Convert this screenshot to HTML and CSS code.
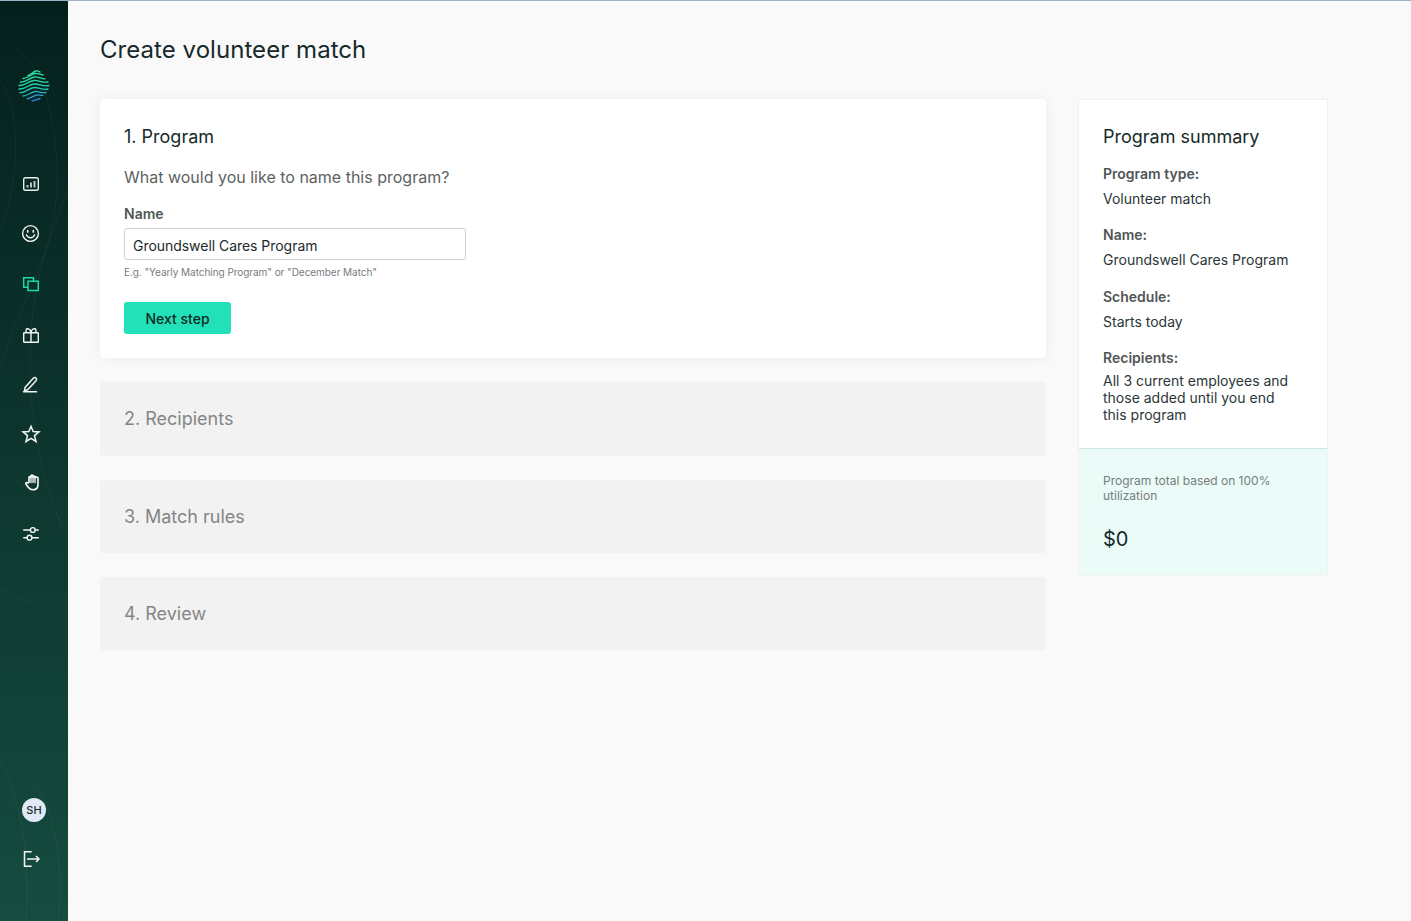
FILE: index.html
```html
<!DOCTYPE html>
<html>
<head>
    <title>Create volunteer match</title>
    <meta name="viewport" content="width=device-width" />
    <link rel="stylesheet" href="styles.css">
</head>
<body>

<nav class="sidebar">
    <svg class="sidebar-lines" width="68" height="921" viewBox="0 0 68 921" fill="none">
        <path d="M16 50c22 12 42 60 41 130c-1 80-38 120-57 190" />
        <path d="M0 80c22 30 20 100 0 150" />
        <path d="M68 190c-20 50-38 100-38 170c0 70 14 130 38 180" />
        <path d="M0 470c30 20 50 35 68 60" />
        <path d="M0 590c30 10 50 20 68 40" />
        <path d="M0 760c20 40 30 90 26 161" />
        <path d="M32 780c22 30 32 80 26 141" />
    </svg>

    <svg class="logo" width="32" height="32" viewBox="0 0 32 32" fill="none" stroke-width="1.300" stroke-linecap="round">
        <path stroke="#2fe0a0" d="M10 5.500c3-.5 5-4 8-4.500c2-.2 3 .5 4 1" />
        <path stroke="#2fe0a0" d="M5 8.500c5 0 8-4.500 12-5c3-.3 5 1 8 1.500" />
        <path stroke="#2cdca4" d="M2.500 12c6 .5 9-4.500 14-5c4-.4 7 2 10.500 1.800" />
        <path stroke="#29d8a8" d="M1 15.500c6.500 .5 9-4.500 15-5c5-.4 8 2.500 14 1.500" />
        <path stroke="#26d2ae" d="M1 19c7 .5 9-4.500 15-5c5-.4 9 3 15 1.500" />
        <path stroke="#25c6b6" d="M2 22.500c6 .5 9-4.500 14-5c5-.4 8 3 14 1.500" />
        <path stroke="#27b2c2" d="M5 26c4 0 8-4 12-4.500c4-.4 6 2 11 1" />
        <path stroke="#2a9cd2" d="M9 28.800c3 0 6-3.300 10-3.800c2-.2 3 .5 6 .3" />
        <path stroke="#2c88e0" d="M14 30.800c3 0 5-1.800 8-2.300" />
    </svg>

    <ul class="nav-icons">
        <li>
            <svg width="20" height="20" viewBox="0 0 20 20" fill="none" stroke="#e8efec" stroke-width="1.400">
                <rect x="2.700" y="3.700" width="14.600" height="12.600" rx="1.800" />
                <path d="M6.500 13.500v-2.500M10 13.500v-5M13.500 13.500v-6.500" stroke-width="2" opacity=".8" />
            </svg>
        </li>
        <li>
            <svg width="20" height="20" viewBox="0 0 20 20" fill="none" stroke="#f2f5f4" stroke-width="1.400" stroke-linecap="round">
                <circle cx="9.500" cy="9.500" r="7.900" />
                <path d="M5.300 10.800c1 2 2.500 3 4.200 3s3.200-1 4.200-3" />
                <path d="M6.700 6.700v1.200M12.300 6.700v1.200" stroke-width="1.700" />
            </svg>
        </li>
        <li>
            <svg width="20" height="20" viewBox="0 0 20 20" fill="none" stroke="#1fd8ae" stroke-width="1.500">
                <path d="M6.700 13.200h-4v-9.500h9.800v3.500" />
                <rect x="7" y="7.200" width="10.300" height="9.300" />
            </svg>
        </li>
        <li>
            <svg width="20" height="20" viewBox="0 0 20 20" fill="none" stroke="#f2f5f4" stroke-width="1.400" stroke-linejoin="round">
                <rect x="2.700" y="8.700" width="14.600" height="9.600" rx=".6" />
                <path d="M10 8.700v9.600M6 8.700c-1-.8-1.300-1.800-1-2.700c.4-1.300 1.900-1.600 3-.9c1.100.7 2 2 2 3.600c0-1.600.9-2.900 2-3.600c1.100-.7 2.600-.4 3 .9c.3.900 0 1.900-1 2.700" />
            </svg>
        </li>
        <li>
            <svg width="20" height="20" viewBox="0 0 20 20" fill="none" stroke="#f2f5f4" stroke-width="1.500" stroke-linejoin="round" stroke-linecap="round">
                <path d="M4 13.500l8.300-9.300c.8-.9 1.900-1 2.700-.2c.8.800.8 1.800 0 2.700l-8.300 9l-3.200 1z" />
                <path d="M2.500 17.700h13" />
            </svg>
        </li>
        <li>
            <svg width="20" height="20" viewBox="0 0 20 20" fill="none" stroke="#f2f5f4" stroke-width="1.500" stroke-linejoin="miter">
                <path d="M10 2.300l2.200 5.200l5.800.4l-4.500 3.700l1.500 5.900l-5-3.200l-5 3.200l1.500-5.900l-4.500-3.700l5.800-.4z" />
            </svg>
        </li>
        <li>
            <svg width="20" height="20" viewBox="0 0 20 20" fill="none" stroke="#ffffff" stroke-width="1.600" stroke-linecap="round" stroke-linejoin="round">
                <path d="M8 8.500v-5c0-1.300 2-1.300 2 0v-1.500c0-1.300 2-1.300 2 0v1c0-1.300 2-1.300 2 0v1c0-1.200 3-1.200 3 0v6.500c0 3.300-1.800 5.200-4.800 5.200c-2.400 0-3.500-.7-4.700-2.200l-2.500-3.300c-.7-1.200.8-2.200 1.800-1.300z" />
                <path d="M10 3.500v5M12 3v5.500M14 4v4.500" stroke-width="1.300" />
            </svg>
        </li>
        <li>
            <svg width="20" height="20" viewBox="0 0 20 20" fill="none" stroke="#f2f5f4" stroke-width="1.400" stroke-linecap="round">
                <path d="M2.700 6h6.600M14.300 6h3M2.700 13.700h3.300M11 13.700h6.300" />
                <circle cx="11.800" cy="6" r="2.400" />
                <circle cx="8.500" cy="13.700" r="2.400" />
            </svg>
        </li>
    </ul>

    <div class="sidebar-bottom">
        <div class="avatar">SH</div>
        <svg class="logout" width="20" height="20" viewBox="0 0 20 20" fill="none" stroke="#f2f5f4" stroke-width="1.500">
            <path d="M9.700 2.700h-7.200v14.600h7.200" />
            <path d="M5 10h12M14 7l3 3l-3 3" />
        </svg>
    </div>
</nav>

<main class="content">
    <h1 class="page-title">Create volunteer match</h1>

    <div class="columns">
        <div class="steps">
            <section class="card">
                <h2 class="step-title">1. Program</h2>
                <p class="question">What would you like to name this program?</p>
                <label class="field-label" for="name">Name</label>
                <input class="field-input" id="name" value="Groundswell Cares Program">
                <p class="hint">E.g. "Yearly Matching Program" or "December Match"</p>
                <button class="btn-next" type="button">Next step</button>
            </section>
            <section class="step-closed">2. Recipients</section>
            <section class="step-closed">3. Match rules</section>
            <section class="step-closed">4. Review</section>
        </div>

        <aside class="summary">
            <div class="summary-body">
                <h2 class="summary-title">Program summary</h2>
                <dl class="summary-list">
                    <dt>Program type:</dt>
                    <dd>Volunteer match</dd>
                    <dt>Name:</dt>
                    <dd>Groundswell Cares Program</dd>
                    <dt>Schedule:</dt>
                    <dd>Starts today</dd>
                    <dt>Recipients:</dt>
                    <dd class="multi">All 3 current employees and those added until you end this program</dd>
                </dl>
            </div>
            <div class="summary-total">
                <p class="total-label">Program total based on 100% utilization</p>
                <p class="total-value">$0</p>
            </div>
        </aside>
    </div>
</main>

</body>
</html>
```

FILE: styles.css
```css
* {
    box-sizing: border-box;
}

body, html {
    margin: 0;
    height: 100%;
}

body {
    display: flex;
    min-height: 921px;
    font-family: Inter, "Noto Sans", sans-serif;
    background: #f9f9f9;
    color: #1d2a2c;
    border-top: 1px solid #9fb0cf;
    overflow: hidden;
}

.sidebar {
    position: relative;
    flex: 0 0 68px;
    margin-top: -1px;
    display: flex;
    flex-direction: column;
    background: linear-gradient(180deg, #04201d 0%, #164c40 100%);
}

.sidebar-lines {
    position: absolute;
    top: 0;
    left: 0;
}

.sidebar-lines path {
    stroke: #ffffff;
    stroke-opacity: .04;
}

.logo {
    position: relative;
    margin: 70px 0 0 18px;
    display: block;
}

.nav-icons {
    position: relative;
    list-style: none;
    margin: 0;
    padding: 0;
    margin-top: 57px;
}

.nav-icons li {
    height: 50px;
    padding-left: 21px;
    display: flex;
    align-items: center;
}

.sidebar-bottom {
    position: relative;
    margin-top: auto;
    padding-bottom: 52px;
    display: flex;
    flex-direction: column;
}

.avatar {
    width: 24px;
    height: 24px;
    margin-left: 22px;
    border-radius: 50%;
    background: #dfeaf6;
    color: #1d2a2c;
    font-size: 11px;
    font-weight: 500;
    line-height: 24px;
    text-align: center;
}

.logout {
    margin: 27px 0 0 22px;
}

.content {
    flex: 1;
    padding: 0 32px;
}

.page-title {
    margin: 34px 0 34px;
    font-size: 24px;
    line-height: 30px;
    font-weight: 400;
    letter-spacing: .05px;
    color: #16292a;
}

.columns {
    display: flex;
    align-items: flex-start;
    gap: 32px;
}

.steps {
    flex: 0 0 946px;
    display: flex;
    flex-direction: column;
    gap: 24px;
}

.card {
    height: 259.200px;
    padding: 25px 24px 0;
    background: #fff;
    border-radius: 4px;
    box-shadow: 0 0 14px rgba(0, 0, 0, .05);
}

.step-title {
    margin: 0;
    font-size: 18px;
    line-height: 26px;
    font-weight: 400;
    color: #16292a;
}

.question {
    margin: 15px 0 0;
    font-size: 16px;
    line-height: 24px;
    color: #5c6262;
}

.field-label {
    display: block;
    margin-top: 15px;
    font-size: 14px;
    line-height: 20px;
    font-weight: 600;
    color: #505656;
}

.field-input {
    display: block;
    width: 342px;
    height: 32px;
    margin-top: 4px;
    padding: 2px 8px 0;
    border: 1px solid #d0d0d0;
    border-radius: 3px;
    font-family: inherit;
    font-size: 14px;
    letter-spacing: -.04px;
    color: #1d2a2c;
    background: #fff;
}

.hint {
    margin: 6px 0 0;
    font-size: 10px;
    line-height: 13px;
    letter-spacing: -.05px;
    color: #777d7f;
}

.btn-next {
    display: block;
    width: 107px;
    height: 32px;
    margin-top: 23px;
    padding: 0;
    border: 0;
    border-radius: 3px;
    background: #22e0b7;
    color: #0f2a25;
    font-family: inherit;
    font-size: 14px;
    font-weight: 500;
}

.step-closed {
    height: 73.400px;
    padding: 0 24px;
    display: flex;
    align-items: center;
    background: #f2f2f2;
    border-radius: 3px;
    font-size: 18px;
    color: #828686;
}

.summary {
    flex: 0 0 250px;
    border: 1px solid #f2f2f2;
    background: #fff;
}

.summary-body {
    padding: 24px 24px 25px;
    border-bottom: 1px solid #c9e8e0;
}

.summary-title {
    margin: 0;
    font-size: 18px;
    line-height: 26px;
    font-weight: 400;
    color: #16292a;
}

.summary-list {
    margin: 15px 0 0;
    font-size: 14px;
    line-height: 17px;
}

.summary-list dt {
    font-weight: 600;
    color: #505656;
    margin-bottom: 8px;
}

.summary-list dd {
    margin: 0 0 19.300px;
    color: #2b3638;
}

.summary-list dd.multi {
    margin: -2px 0 0;
    max-width: 190px;
}

.summary-total {
    height: 126px;
    padding: 24px 24px 0;
    background: #eafbf8;
}

.total-label {
    margin: 0;
    font-size: 12px;
    line-height: 15px;
    color: #777d7f;
}

.total-value {
    margin: 22px 0 0;
    font-size: 20px;
    line-height: 28px;
    color: #16292a;
}
```
